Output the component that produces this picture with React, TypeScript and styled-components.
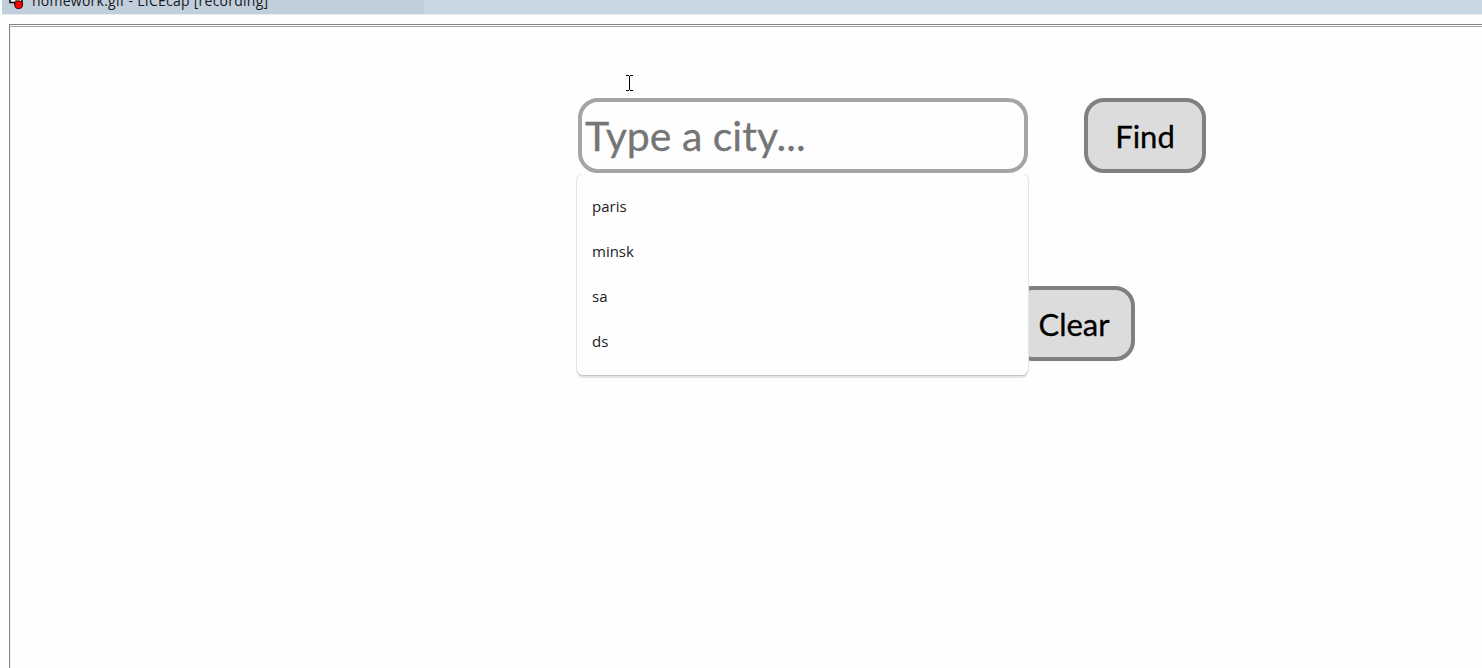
import React from "react";
import styled, { createGlobalStyle } from "styled-components";

const GlobalStyle = createGlobalStyle`
  * { box-sizing: border-box; }
  body { margin: 0; background: #fefefe; overflow: hidden; }
`;

const Screen = styled.div`
  width: 1482px;
  height: 668px;
  overflow: hidden;
  display: flex;
  flex-direction: column;
  background: #fefefe;
`;

const TitleBar = styled.header`
  flex: none;
  height: 15px;
  margin-left: 2px;
  display: flex;
  border-bottom: 1px solid #e6ebf0;
  background: #c9d7e4;
`;

const WindowTitle = styled.div`
  width: 422px;
  height: 14px;
  padding-left: 6px;
  display: flex;
  align-items: flex-start;
  overflow: hidden;
  background: #c1cedb;
`;

const AppIcon = styled.svg`
  flex: none;
  width: 18px;
  height: 10px;
`;

const TitleText = styled.span`
  margin: -9px 0 0 6px;
  font: 14px/20px "Segoe UI", "Open Sans", sans-serif;
  letter-spacing: 0.25px;
  color: #17191c;
  white-space: pre;
`;

const Frame = styled.main`
  flex: 1;
  margin: 9px 0 0 9px;
  border-top: 1px solid #858585;
  border-left: 1px solid #858585;
`;

const Content = styled.div`
  height: 100%;
  margin-top: 1px;
  padding: 71px 0 0 567px;
  border-top: 1px solid #a5a5a5;
  border-left: 1px solid #f3f3f3;
`;

const SearchRow = styled.form`
  display: flex;
  gap: 56px;
  height: 75px;
`;

const Field = styled.div`
  position: relative;
  width: 450px;
  height: 75px;
  padding-left: 3px;
  border: 4px solid #a5a5a5;
  border-radius: 20px;
  background: #fefefe;
`;

const Handwritten = styled.span<{ $size: number; $spacing: number; $color: string }>`
  font-family: "Comic Sans MS", Lato, sans-serif;
  font-size: ${(p) => p.$size}px;
  line-height: 68px;
  letter-spacing: ${(p) => p.$spacing}px;
  color: ${(p) => p.$color};
  -webkit-text-stroke: 0.3px ${(p) => p.$color};
  white-space: pre;
`;

const Button = styled.button`
  width: 122px;
  height: 75px;
  padding: 0;
  border: 4px solid #808080;
  border-radius: 20px;
  background: #dcdcdc;
`;

const ClearRow = styled.div`
  padding: 113px 0 0 435px;
`;

const Suggestions = styled.ul`
  position: absolute;
  z-index: 2;
  top: 72px;
  left: -5px;
  width: 451px;
  height: 201px;
  margin: 0;
  padding: 10px 0 11px;
  list-style: none;
  border-radius: 6px;
  background: #fefefe;
  box-shadow: 0 1px 0 0 #c4c4c6, 0 0 0 1px #e4e4e8, 0 3px 0 0 #e4e4e8;
  clip-path: inset(0 -4px -5px -4px);
`;

const Suggestion = styled.li`
  height: 45px;
  padding-left: 15px;
  font: 15px/45px "Segoe UI", "Open Sans", sans-serif;
  color: #202124;
`;

const Pointer = styled.svg`
  position: absolute;
  left: 44px;
  top: -27px;
  width: 7px;
  height: 16px;
`;

const cities = ["paris", "minsk", "sa", "ds"];

export default function App() {
  return (
    <Screen>
      <GlobalStyle />
      <TitleBar>
        <WindowTitle>
          <AppIcon viewBox="0 0 18 10">
            <path d="M2 0v2.5h5v2h7V0" fill="#fff" stroke="#000" strokeWidth="1.5" />
            <path d="M8 0v2h6" fill="none" stroke="#000" />
            <circle cx="10.7" cy="4.7" r="4" fill="#f00" stroke="#000" strokeWidth="0.8" />
          </AppIcon>
          <TitleText>homework.gif - LICEcap [recording]</TitleText>
        </WindowTitle>
      </TitleBar>
      <Frame>
        <Content>
          <SearchRow>
            <Field>
              <Handwritten $size={41} $spacing={0} $color="#757575">Type a city...</Handwritten>
              <Pointer viewBox="0 0 7 16" shapeRendering="crispEdges">
                <path d="M0 .5h3M4 .5h3M3.5 1v14M0 15.5h3M4 15.5h3" fill="none" stroke="#000" />
              </Pointer>
              <Suggestions>
                {cities.map((c) => (
                  <Suggestion key={c}>{c}</Suggestion>
                ))}
              </Suggestions>
            </Field>
            <Button type="button">
              <Handwritten $size={31} $spacing={0} $color="#000">Find</Handwritten>
            </Button>
          </SearchRow>
          <ClearRow>
            <Button type="button">
              <Handwritten $size={31} $spacing={0} $color="#000">Clear</Handwritten>
            </Button>
          </ClearRow>
        </Content>
      </Frame>
    </Screen>
  );
}
